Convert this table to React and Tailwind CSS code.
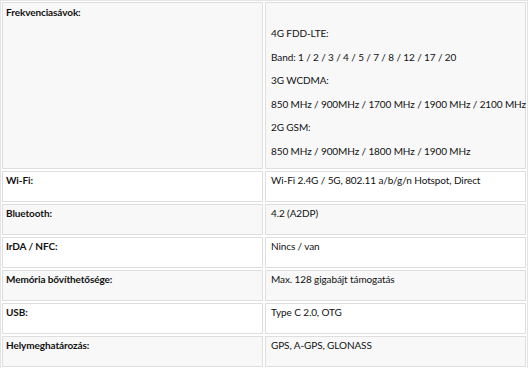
import React from 'react';

const rows = [
  { label: 'Wi-Fi:', value: 'Wi-Fi 2.4G / 5G, 802.11 a/b/g/n Hotspot, Direct' },
  { label: 'Bluetooth:', value: '4.2 (A2DP)' },
  { label: 'IrDA / NFC:', value: 'Nincs / van' },
  { label: 'Memória bővíthetősége:', value: 'Max. 128 gigabájt támogatás' },
  { label: 'USB:', value: 'Type C 2.0, OTG' },
  { label: 'Helymeghatározás:', value: 'GPS, A-GPS, GLONASS' },
];

const bands = [
  '4G FDD-LTE:',
  'Band: 1 / 2 / 3 / 4 / 5 / 7 / 8 / 12 / 17 / 20',
  '3G WCDMA:',
  '850 MHz / 900MHz / 1700 MHz / 1900 MHz / 2100 MHz',
  '2G GSM:',
  '850 MHz / 900MHz / 1800 MHz / 1900 MHz',
];

export default function App() {
  return (
    <div className="w-[529px] h-[368px] bg-white overflow-hidden text-[#111] text-[10px] tracking-[-0.1px]" style={{ fontFamily: 'Lato, "Open Sans", sans-serif' }}>
      <div className="w-[528px] border border-[#e4e4e4] p-[1px] grid grid-cols-[261px_261px] gap-[2px]">
        {/* frekvenciák */}
        <div className="h-[167px] bg-[#f8f8f8] border border-[#dedede] px-[3px] pt-[2px] font-bold leading-[14px]">
          Frekvenciasávok:
        </div>
        <div className="h-[167px] bg-[#f8f8f8] border border-[#dedede] px-[5px] pt-[19px]">
          {bands.map((b) => (
            <div key={b} className="leading-[23.6px] whitespace-nowrap">{b}</div>
          ))}
        </div>
        {rows.map((r, i) => {
          const bg = i % 2 === 0 ? 'bg-white' : 'bg-[#f8f8f8]';
          return (
            <React.Fragment key={r.label}>
              <div className={`h-[31px] ${bg} border border-[#dedede] px-[3px] pt-[1px] font-bold leading-[14px]`}>
                {r.label}
              </div>
              <div className={`h-[31px] ${bg} border border-[#dedede] px-[5px] pt-[1px] leading-[14px] whitespace-nowrap`}>
                {r.value}
              </div>
            </React.Fragment>
          );
        })}
      </div>
    </div>
  );
}
